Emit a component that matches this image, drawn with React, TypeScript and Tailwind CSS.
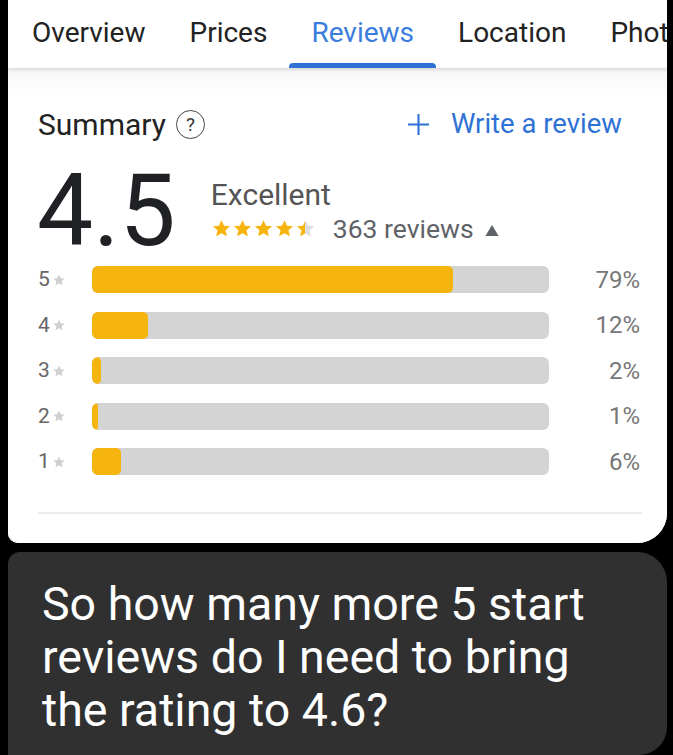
import React from "react";

const tabs = ["Overview", "Prices", "Reviews", "Location", "Photos"];

const rows = [
  { n: 5, pct: 79, fill: 361 },
  { n: 4, pct: 12, fill: 56 },
  { n: 3, pct: 2, fill: 9 },
  { n: 2, pct: 1, fill: 6 },
  { n: 1, pct: 6, fill: 29 },
];

const Star: React.FC<{ className?: string; half?: boolean }> = ({ className, half }) => (
  <svg viewBox="0 0 24 24" className={className}>
    {half && (
      <defs>
        <linearGradient id="half">
          <stop offset="50%" stopColor="#f6b40e" />
          <stop offset="50%" stopColor="#dadce0" />
        </linearGradient>
      </defs>
    )}
    <path
      fill={half ? "url(#half)" : "currentColor"}
      d="M12 2.5l2.9 6.3 6.9.7-5.2 4.6 1.5 6.8L12 17.4l-6.1 3.5 1.5-6.8-5.2-4.6 6.9-.7z"
    />
  </svg>
);

export default function App() {
  return (
    <div
      className="flex h-[755px] w-[673px] flex-col overflow-hidden bg-black pl-[8px] pr-[6px]"
      style={{ fontFamily: "Roboto, 'Noto Sans', sans-serif" }}
    >
      {/* review card */}
      <div className="flex h-[543px] shrink-0 flex-col overflow-hidden rounded-bl-[10px] rounded-br-[30px] bg-white">
        {/* tabs, last one runs off the card like the screenshot */}
        <div className="relative z-10 flex h-[68px] shrink-0 items-stretch overflow-hidden whitespace-nowrap pl-[2px] shadow-[0_2px_3px_rgb(0_0_0/12%)]">
          {tabs.map((t) => (
            <div
              key={t}
              className={`relative flex shrink-0 items-center px-[22px] pb-[3px] text-[28px] ${
                t === "Reviews" ? "text-[#3b7ddd]" : "text-[#222]"
              }`}
            >
              {t}
              {t === "Reviews" && (
                <div className="absolute bottom-0 left-0 right-0 h-[5px] rounded-t-[4px] bg-[#2f72d6]" />
              )}
            </div>
          ))}
        </div>

        <div className="flex flex-1 flex-col bg-gradient-to-b from-[#f7f7f7] to-white to-[30px] px-[30px]">
          <div className="mt-[39px] flex h-[34px] items-center justify-between pr-[15px]">
            <div className="flex items-center gap-[10px] text-[30px] text-[#222]">
              Summary
              <span className="flex h-[29px] w-[29px] items-center justify-center rounded-full border-[1.5px] border-[#444] text-[19px] leading-none text-[#333]">
                ?
              </span>
            </div>
            <div className="flex items-center gap-[21px] text-[27.5px] text-[#2f72d6]">
              <svg viewBox="0 0 24 24" className="h-[23px] w-[23px]">
                <path d="M12 1v22M1 12h22" stroke="currentColor" strokeWidth="2.2" />
              </svg>
              Write a review
            </div>
          </div>

          <div className="mt-[25px] flex items-start">
            <div className="ml-[-1px] text-[100px] font-normal leading-[90px] text-[#202124]">
              4.5
            </div>
            <div className="ml-[35px] mt-[11px] flex flex-col">
              <div className="text-[30px] leading-[36px] text-[#555]">Excellent</div>
              <div className="flex h-[31px] items-center">
                <div className="flex items-center text-[#f6b40e]">
                  {[0, 1, 2, 3].map((i) => (
                    <Star key={i} className="h-[21px] w-[21px]" />
                  ))}
                  <Star half className="h-[21px] w-[21px]" />
                </div>
                <span className="ml-[17px] text-[26.5px] text-[#5f6368]">363 reviews</span>
                <svg viewBox="0 0 12 10" className="ml-[11px] mt-[4px] h-[11px] w-[14px]">
                  <path d="M6 0l6 10H0z" fill="#5f6368" />
                </svg>
              </div>
            </div>
          </div>

          <div className="mt-[10px] flex flex-col gap-[18.5px]">
            {rows.map((r) => (
              <div key={r.n} className="flex h-[27px] items-center">
                <div className="flex w-[54px] shrink-0 items-center text-[21px] leading-none text-[#666]">
                  {r.n}
                  <Star className="ml-[2px] h-[14px] w-[14px] text-[#cfcfcf]" />
                </div>
                <div className="relative h-[27px] w-[457px] shrink-0 overflow-hidden rounded-[6px] bg-[#d4d4d4]">
                  <div
                    className="h-full rounded-[5px] bg-[#f6b40e]"
                    style={{ width: r.fill }}
                  />
                </div>
                <div className="mr-[-3px] flex-1 text-right text-[24px] leading-none text-[#777]">{r.pct}%</div>
              </div>
            ))}
          </div>

          <div className="mt-[37px] h-[2px] w-[604px] bg-[#ececec]" />
        </div>
      </div>

      {/* message bubble */}
      <div className="mt-[9px] flex-1 rounded-tl-[12px] rounded-tr-[30px] rounded-br-[28px] bg-[#303030] px-[34px] pt-[26px]">
        <p className="text-[46.5px] leading-[53px] text-white">
          So how many more 5 start
          <br />
          reviews do I need to bring
          <br />
          the rating to 4.6?
        </p>
      </div>
    </div>
  );
}
